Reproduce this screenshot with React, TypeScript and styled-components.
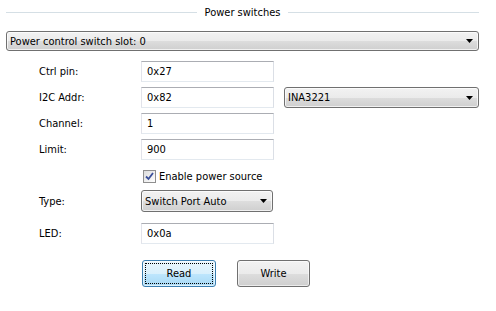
import * as React from "react";
import styled, { createGlobalStyle } from "styled-components";

const Global = createGlobalStyle`
  html, body {
    margin: 0;
    padding: 0;
    background: #ffffff;
  }
  body {
    font-family: "DejaVu Sans Condensed", "Liberation Sans", sans-serif;
    font-size: 11px;
    color: #000000;
  }
`;

const Page = styled.div`
  width: 496px;
  height: 311px;
  padding: 0 17px 0 6px;
  box-sizing: border-box;
  overflow: hidden;
`;

const GroupHeader = styled.div`
  display: flex;
  align-items: center;
  height: 24px;
  gap: 8px;
`;

const HeaderLine = styled.div`
  flex: 1;
  height: 1px;
  background: #d5dfe5;
`;

const HeaderTitle = styled.span`
  white-space: nowrap;
`;

const SlotRow = styled.div`
  margin-top: 7px;
`;

const Combo = styled.div<{ $width?: number; $height?: number }>`
  display: flex;
  align-items: center;
  justify-content: space-between;
  box-sizing: border-box;
  width: ${(p) => (p.$width ? `${p.$width}px` : "100%")};
  height: ${(p) => p.$height || 21}px;
  padding: 0 5px 0 3px;
  border: 1px solid #707070;
  border-radius: 3px;
  background: linear-gradient(
    to bottom,
    #f2f2f2 0%,
    #ebebeb 50%,
    #dddddd 51%,
    #cfcfcf 100%
  );
  box-shadow: inset 0 0 0 1px rgba(255, 255, 255, 0.7);
`;

const ComboArrow = () => (
  <svg width="7" height="4" viewBox="0 0 7 4">
    <path d="M0 0H7L3.5 4Z" fill="#000" />
  </svg>
);

const Form = styled.div`
  margin: 10px 0 0 33px;
  display: grid;
  grid-template-columns: 102px 133px 10px 195px;
  align-items: center;
`;

const Label = styled.span<{ $top?: number }>`
  grid-column: 1;
  margin-top: ${(p) => p.$top || 0}px;
`;

const Field = styled.div<{ $top?: number }>`
  grid-column: 2;
  margin-top: ${(p) => p.$top || 0}px;
`;

const Extra = styled.div<{ $top?: number }>`
  grid-column: 4;
  margin-top: ${(p) => p.$top || 0}px;
`;

const TextBox = styled.div`
  box-sizing: border-box;
  width: 133px;
  height: 21px;
  display: flex;
  align-items: center;
  padding-left: 5px;
  border: 1px solid #e3e9ef;
  border-top-color: #abadb3;
  border-left-color: #e2e3ea;
  border-right-color: #dbdfe6;
  background: #ffffff;
`;

const CheckRow = styled.div`
  grid-column: 2 / span 3;
  display: flex;
  align-items: center;
  gap: 3px;
  margin: 9px 0 0 2px;
  height: 14px;
`;

const CheckBox = styled.div`
  box-sizing: border-box;
  width: 13px;
  height: 13px;
  border: 1px solid #8f8f8f;
  background: linear-gradient(135deg, #dcdcdc 0%, #ffffff 100%);
  display: flex;
  align-items: center;
  justify-content: center;
`;

const Buttons = styled.div`
  grid-column: 2 / span 3;
  display: flex;
  gap: 21px;
  margin: 16px 0 0 1px;
`;

const Button = styled.div<{ $primary?: boolean }>`
  position: relative;
  box-sizing: border-box;
  width: ${(p) => (p.$primary ? 74 : 73)}px;
  height: 27px;
  display: flex;
  align-items: center;
  justify-content: center;
  border-radius: 3px;
  border: 1px solid ${(p) => (p.$primary ? "#3c7fb1" : "#707070")};
  background: ${(p) =>
    p.$primary
      ? "linear-gradient(to bottom, #eaf6fd 0%, #d9f0fc 50%, #bee6fd 51%, #a7d9f5 100%)"
      : "linear-gradient(to bottom, #f2f2f2 0%, #ebebeb 50%, #dddddd 51%, #cfcfcf 100%)"};
  box-shadow: inset 0 0 0 1px rgba(255, 255, 255, 0.6);
  ${(p) =>
    p.$primary &&
    `&::after {
      content: "";
      position: absolute;
      inset: 2px;
      border: 1px dotted #000;
    }`}
`;

const rows: { label: string; value: string }[] = [
  { label: "Ctrl pin:", value: "0x27" },
  { label: "I2C Addr:", value: "0x82" },
  { label: "Channel:", value: "1" },
  { label: "Limit:", value: "900" },
];

export default function App() {
  return (
    <Page>
      <Global />
      <GroupHeader>
        <HeaderLine />
        <HeaderTitle>Power switches</HeaderTitle>
        <HeaderLine />
      </GroupHeader>
      <SlotRow>
        <Combo $height={20}>
          <span>Power control switch slot: 0</span>
          <ComboArrow />
        </Combo>
      </SlotRow>
      <Form>
        {rows.map((r, i) => (
          <React.Fragment key={r.label}>
            <Label $top={i ? 5 : 0} style={{ gridRow: i + 1 }}>
              {r.label}
            </Label>
            <Field $top={i ? 5 : 0} style={{ gridRow: i + 1 }}>
              <TextBox>{r.value}</TextBox>
            </Field>
            {i === 1 && (
              <Extra $top={5} style={{ gridRow: 2 }}>
                <Combo $width={195}>
                  <span>INA3221</span>
                  <ComboArrow />
                </Combo>
              </Extra>
            )}
          </React.Fragment>
        ))}
        <CheckRow>
          <CheckBox>
            <svg width="9" height="9" viewBox="0 0 9 9">
              <path
                d="M1 4.5L3.5 7L8 1"
                fill="none"
                stroke="#3a4f9a"
                strokeWidth="1.8"
              />
            </svg>
          </CheckBox>
          <span>Enable power source</span>
        </CheckRow>
        <Label $top={7}>Type:</Label>
        <Field $top={7}>
          <Combo $width={132} $height={22}>
            <span>Switch Port Auto</span>
            <ComboArrow />
          </Combo>
        </Field>
        <Label $top={11}>LED:</Label>
        <Field $top={11}>
          <TextBox>0x0a</TextBox>
        </Field>
        <Buttons>
          <Button $primary>Read</Button>
          <Button>Write</Button>
        </Buttons>
      </Form>
    </Page>
  );
}
